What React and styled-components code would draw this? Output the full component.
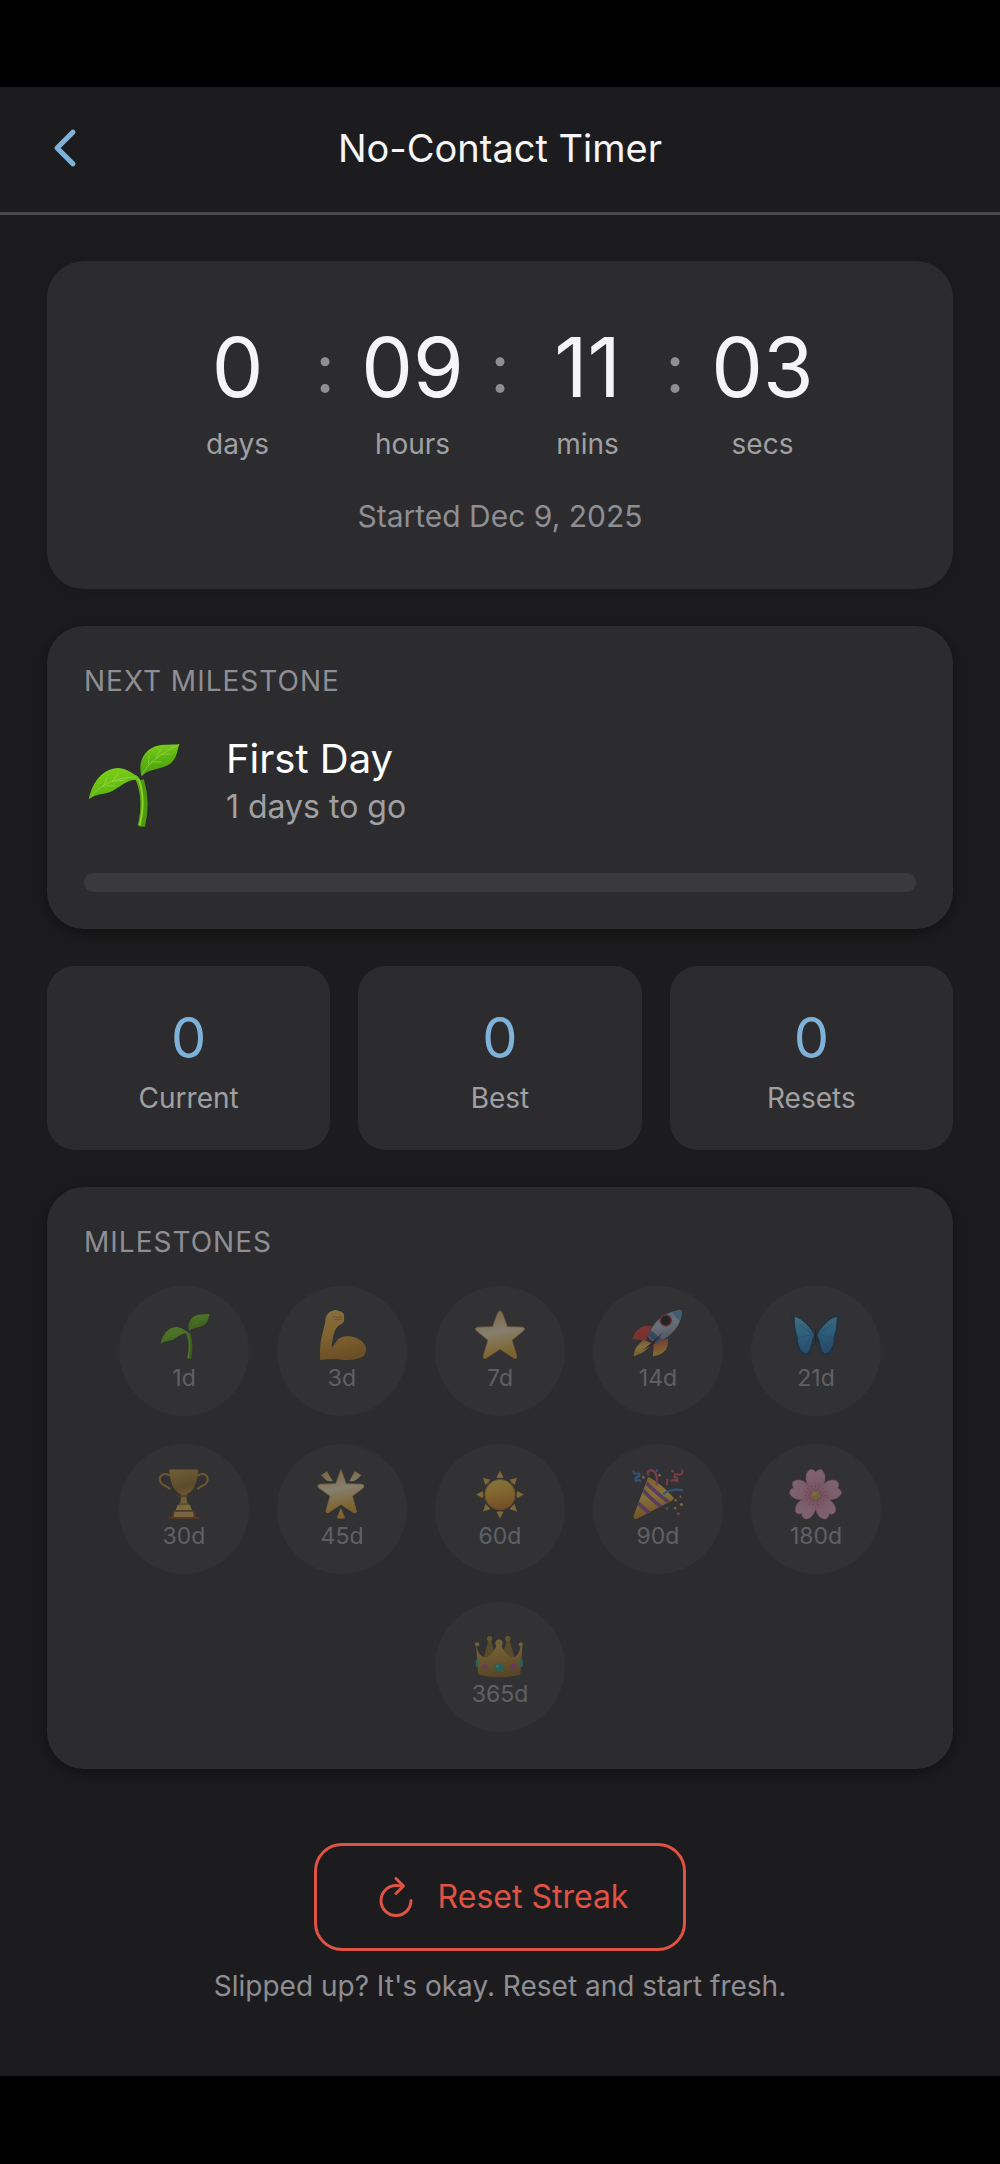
import React from "react";
import styled, { createGlobalStyle } from "styled-components";

const color = {
  page: "#1c1c1e",
  card: "#2c2c2e",
  track: "#3a3a3c",
  line: "#48484a",
  text: "#f5f5f7",
  secondary: "#a0a0a3",
  muted: "#8e8e93",
  blue: "#7fb2d8",
  red: "#e05243",
};

const GlobalStyle = createGlobalStyle`
  *, *::before, *::after { box-sizing: border-box; }
  body {
    margin: 0;
    background: #000;
    color: ${color.text};
    font-family: Inter, "Liberation Sans", sans-serif;
    font-weight: 400;
  }
  h1, h2, h3, p, ul { margin: 0; padding: 0; font-weight: 400; }
`;

const Screen = styled.div`
  padding: 87px 0 88px;
`;

const Panel = styled.div`
  background: ${color.page};
`;

const Header = styled.header`
  display: grid;
  grid-template-columns: 56px 1fr 56px;
  align-items: center;
  padding: 33px 37px 36px;
  border-bottom: 3px solid ${color.line};
`;

const BackButton = styled.button`
  display: flex;
  padding: 0;
  border: 0;
  background: none;
  color: ${color.blue};
  cursor: pointer;
`;

const Title = styled.h1`
  font-size: 38px;
  line-height: 56px;
  text-align: center;
`;

const Content = styled.main`
  display: flex;
  flex-direction: column;
  gap: 37px;
  padding: 46px 47px 72px;
`;

const Card = styled.section`
  padding: ${(p) => (p.$roomy ? "57px 37px 55px" : "37px")};
  border-radius: 37px;
  background: ${color.card};
  box-shadow: 0 4px 18px rgba(0, 0, 0, ${(p) => (p.$roomy ? 0.15 : 0.4)});
`;

const Clock = styled.div`
  display: flex;
  justify-content: center;
`;

const Unit = styled.div`
  display: flex;
  flex-direction: column;
  align-items: center;
  gap: 8px;
  width: 129px;
`;

const UnitValue = styled.span`
  font-size: 82px;
  line-height: 100px;
`;

const Colon = styled.span`
  width: 46px;
  color: ${color.muted};
  font-size: 68px;
  line-height: 100px;
  text-align: center;
`;

const Label = styled.span`
  color: ${color.secondary};
  font-size: 28px;
  line-height: 36px;
`;

const Started = styled.p`
  margin-top: 36px;
  color: ${color.muted};
  font-size: 30px;
  line-height: 36px;
  text-align: center;
`;

const SectionTitle = styled.h2`
  color: ${color.muted};
  font-size: 28px;
  line-height: 36px;
  letter-spacing: 1px;
  text-transform: uppercase;
`;

const NextRow = styled.div`
  display: flex;
  align-items: center;
  gap: 46px;
  margin: 36px 0 42px;
`;

const NextName = styled.h3`
  font-size: 40px;
  line-height: 48px;
  color: #fff;
`;

const NextLeft = styled.p`
  color: ${color.secondary};
  font-size: 32px;
  line-height: 48px;
`;

const Track = styled.div`
  height: 19px;
  border-radius: 9px;
  background: ${color.track};
  overflow: hidden;
`;

const Fill = styled.div`
  height: 100%;
  background: ${color.blue};
`;

const Stats = styled.div`
  display: grid;
  grid-template-columns: repeat(3, 1fr);
  gap: 28px;
`;

const Stat = styled.div`
  display: flex;
  flex-direction: column;
  align-items: center;
  gap: 8px;
  padding: 38px 16px 34px;
  border-radius: 28px;
  background: ${color.card};
`;

const StatValue = styled.span`
  color: ${color.blue};
  font-size: 56px;
  line-height: 68px;
`;

const Badges = styled.ul`
  display: flex;
  flex-wrap: wrap;
  justify-content: center;
  gap: 28px;
  margin-top: 26px;
  list-style: none;
`;

const Badge = styled.li`
  display: flex;
  flex-direction: column;
  align-items: center;
  justify-content: center;
  gap: 2px;
  width: 130px;
  height: 130px;
  border-radius: 50%;
  background: ${color.track};
  opacity: ${(p) => (p.$locked ? 0.45 : 1)};
`;

const BadgeDays = styled.span`
  color: ${color.secondary};
  font-size: 23px;
  line-height: 30px;
`;

const ResetArea = styled.div`
  display: flex;
  flex-direction: column;
  align-items: center;
  gap: 18px;
  padding-top: 37px;
`;

const ResetButton = styled.button`
  display: flex;
  align-items: center;
  gap: 18px;
  padding: 27px 55px;
  border: 3px solid ${color.red};
  border-radius: 28px;
  background: none;
  color: ${color.red};
  font: inherit;
  font-size: 32px;
  line-height: 48px;
  cursor: pointer;
`;

const Hint = styled.p`
  color: ${color.muted};
  font-size: 28px;
  line-height: 35px;
  text-align: center;
`;

const EmojiSvg = styled.svg`
  flex: none;
  width: ${(p) => p.$size}px;
  height: ${(p) => p.$size}px;
  overflow: visible;
`;

const Gradients = styled.svg`
  display: block;
  width: 0;
  height: 0;
`;

const STAR = "M50 4 Q53 4 55 9 L64 34 L93 35 Q100 37 95 42 L73 60 L82 90 Q83 98 76 94 L50 77 L24 94 Q17 98 18 90 L27 60 L5 42 Q0 37 7 35 L36 34 L45 9 Q47 4 50 4Z";

const art = {
  sprout: (
    <>
      <path d="M5 67C9 48 20 35 36 34.500C45 35 51 41 56 43C61 50 66 66 63.500 94Q59 97 56 94C60 78 60 62 54 47C46 46 39 53 31 57.500C21 63 13 60 5 67Z" fill="url(#leaf)" />
      <path d="M60 43C57 33 59 23 67 16C76 8 90 11 99.700 9.400C97 14 98 22 91 29C82 37 68 34 60 43Z" fill="url(#leaf)" />
      <path d="M7 65C18 50 35 44 54 44M60 42C66 30 79 20 97 11M20 54L24 45M29 49L36 40M23 53L33 53M32 48L43 47M67 31L68 22M75 24L80 15M70 28L81 28M80 20L90 20" fill="none" stroke="#b3e26a" strokeWidth="1" opacity=".5" />
      <path d="M59 47C63 60 64 78 60 95" fill="none" stroke="#4e9a12" strokeWidth="7" />
      <path d="M57 46C62 60 62 78 58 94" fill="none" stroke="#8fd328" strokeWidth="2" />
    </>
  ),
  arm: (
    <>
      <path d="M8 96C7 75 9 58 13 45L18 24C18 14 23 6 31 4Q38 0 44 4Q53 5 54 13L54 23Q51 29 45 31C35 37 32 55 30 74C37 69 39 58 48 55C61 49 80 53 90 64Q102 77 92 90C82 98 58 100 42 96Q24 96 8 98Z" fill="url(#skin)" />
      <path d="M26 77C31 82 31 72 38 67M31 14Q40 18 50 15M35 20Q42 22 50 19" fill="none" stroke="#a87420" strokeWidth="1.500" />
    </>
  ),
  star: <path d={STAR} fill="url(#star)" stroke="#d99b52" strokeWidth="1.500" />,
  rocket: (
    <>
      <path d="M38 33C20 29 5 40 1 58L27 60ZM69 56C72 75 62 89 40 91L42 68Z" fill="url(#fin)" />
      <path d="M22 59C9 69 4 80 3 91C18 87 29 80 38 66Z" fill="url(#flame)" />
      <path d="M31 54C38 27 62 4 95 2C97 30 78 52 45 67Z" fill="url(#hull)" />
      <path d="M77 6L95 2Q97 12 92 24Q82 14 77 6Z" fill="#5c9bc9" />
      <path d="M32 52L47 65L57 58C50 52 43 47 36 41Z" fill="#37699c" />
      <path d="M20 80L60 45L42 67Z" fill="#4c1f28" />
      <circle cx="65" cy="22" r="12" fill="#a8323a" />
      <circle cx="65" cy="22" r="9" fill="#171a20" />
    </>
  ),
  butterfly: (
    <g transform="translate(-2.5 0) scale(1.06 1)">
      <path d="M49 52C43 33 24 12 4 12Q1 17 8 25C9 37 8 47 14 56Q11 65 17 77C22 90 31 93 37 88C45 78 43 65 49 54C54 65 52 78 60 88C67 93 76 90 81 77Q87 65 84 56C90 47 89 37 90 25Q98 17 94 12C74 12 55 33 49 52Z" fill="#183a58" />
      <path d="M46 50C39 35 26 20 11 15C11 28 12 45 17 55Q15 64 21 76Q27 87 34 84C42 75 39 64 46 50ZM52 50C59 35 72 20 87 15C87 28 86 45 81 55Q83 64 77 76Q71 87 64 84C56 75 59 64 52 50Z" fill="url(#wing)" />
      <path d="M45 49L17 55M45 49L25 80M45 49L20 30M53 49L81 55M53 49L73 80M53 49L78 30" stroke="#246b9b" strokeWidth="1" />
      <path d="M49 38Q52 56 49 70Q46 56 49 38Z" fill="#17191c" />
    </g>
  ),
  trophy: (
    <>
      <path d="M24 17C10 8 0 18 5 29C9 38 20 36 23 43M75 17C89 8 99 18 94 29C90 38 79 36 76 43" fill="none" stroke="#ba8c2d" strokeWidth="4" />
      <path d="M22 5H77C76 28 71 45 55 53V62Q55 70 62 74L65 83H34L37 74Q44 70 44 62V53C28 45 23 28 22 5Z" fill="url(#gold)" />
      <path d="M36 56H63M38 71H61" stroke="#6f4e13" strokeWidth="2" />
      <path d="M30 83H70L74 96H79V100H20V96H26Z" fill="#87421e" />
      <path d="M32 86H67L69 96H30Z" fill="#d4aa57" />
    </>
  ),
  glow: (
    <>
      <path d="M48 5L58 32L89 33Q95 35 91 40L70 56L78 86Q76 90 71 87L48 72L25 87Q20 90 19 86L27 56L5 40Q1 35 7 33L38 32Z" fill="url(#star)" stroke="#d99b52" strokeWidth="1.500" />
      <path d="M21 8L32 27Q24 29 18 24L10 16ZM75 8L64 27Q72 29 78 24L87 16ZM48 79L56 98Q48 101 40 98Z" fill="url(#star)" />
    </>
  ),
  sun: (
    <>
      {[0, 45, 90, 135, 180, 225, 270, 315].map((a) => (
        <path key={a} d="M43 20L50 7L57 20Q50 22 43 20Z" fill="#dfad45" transform={`rotate(${a} 50 53)`} />
      ))}
      <circle cx="50" cy="53" r="29" fill="url(#sun)" stroke="#a9742c" strokeWidth="2" />
    </>
  ),
  party: (
    <>
      <path d="M31 19C44 24 67 43 81 60Q76 67 62 72L9 100Q2 100 3 94Z" fill="url(#cone)" />
      <path d="M20 49Q35 64 51 78L59 74Q38 59 23 41ZM11 74L29 90L36 86L14 67ZM26 34Q45 53 66 69L74 66Q47 46 29 27Z" fill="#925197" />
      <path d="M47 35Q51 7 35 6Q27 10 32 16" fill="none" stroke="#d95368" strokeWidth="4" />
      <path d="M60 52Q77 40 98 45M3 7Q2 14 10 13Q17 11 14 18Q3 20 8 27Q16 22 17 29" fill="none" stroke="#3984d0" strokeWidth="4" />
      <path d="M96 5Q100 15 90 15Q80 10 82 20Q88 19 87 27Q77 23 75 28M68 23L67 35" fill="none" stroke="#d95368" strokeWidth="4" />
      <g fill="#e1b03e">
        <circle cx="22" cy="20" r="2.500" /><circle cx="53" cy="16" r="2.500" /><circle cx="84" cy="64" r="2.500" /><circle cx="95" cy="72" r="3" /><circle cx="83" cy="79" r="2.500" /><circle cx="93" cy="57" r="2" />
      </g>
      <circle cx="48" cy="7" r="2.500" fill="#3984d0" /><circle cx="67" cy="80" r="2.500" fill="#3984d0" />
      <circle cx="89" cy="90" r="3" fill="#d95368" /><circle cx="78" cy="8" r="2.500" fill="#d95368" />
    </>
  ),
  flower: (
    <>
      {[0, 72, 144, 216, 288].map((a) => (
        <g key={a} transform={`rotate(${a} 49 54)`}>
          <path d="M49 53C33 40 26 20 34 9Q39 2 47 7L49 10L52 7Q60 2 64 9C72 20 65 40 49 53Z" fill="url(#petal)" stroke="#c7839b" strokeWidth="1" />
          <path d="M49 46V31M46 44L41 35M52 44L57 35" stroke="#a84b6b" strokeWidth="1.300" strokeDasharray="3 4" />
        </g>
      ))}
      <circle cx="49" cy="54" r="9" fill="#c99d46" />
      <circle cx="47" cy="52" r="4" fill="#ddb960" />
    </>
  ),
  crown: (
    <>
      <path d="M15 78L28 28H33Q36 50 48 60Q60 50 63 28H68L82 78Z" fill="#8f7124" />
      <circle cx="30" cy="26" r="5" fill="#ac862f" /><circle cx="65" cy="26" r="5" fill="#ac862f" />
      <path d="M4 38Q8 60 21 63Q34 61 45 37H51Q62 61 75 63Q87 60 90 38L93 40L89 95Q48 106 8 95Z" fill="url(#crown)" />
      <circle cx="6" cy="37" r="4" fill="#caa044" /><circle cx="48" cy="35" r="7" fill="#caa044" /><circle cx="90" cy="37" r="4" fill="#caa044" />
      <circle cx="48" cy="82" r="9" fill="#2c9b8a" /><circle cx="45" cy="79" r="3" fill="#62c3b1" />
      <circle cx="21" cy="80" r="5" fill="#ad4e92" /><circle cx="76" cy="80" r="6" fill="#ad4e92" />
      <ellipse cx="6" cy="73" rx="3" ry="8" fill="#2c9b8a" /><ellipse cx="91" cy="73" rx="3" ry="8" fill="#2c9b8a" />
    </>
  ),
};

const gradients = [
  ["leaf", ["#82d51b", "#5eb510", "#4d9d10"]],
  ["skin", ["#f6c456", "#e8a834", "#b97c20"]],
  ["star", ["#d7ab58", "#f1e5bb", "#e2a426"]],
  ["fin", ["#df3e32", "#d53a34", "#e8ae35"]],
  ["flame", ["#d96733", "#e6c654", "#d88a25"]],
  ["hull", ["#87a9c7", "#b4c1cf", "#7485a0"]],
  ["wing", ["#63b8e4", "#329dd8", "#2376b4"]],
  ["gold", ["#c9a044", "#9b7023", "#dcb653"]],
  ["sun", ["#f0ce5b", "#e8ad2f", "#cf7b20"]],
  ["cone", ["#dba128", "#f1c94c", "#c68019"]],
  ["petal", ["#e9a9c0", "#df9db6", "#cf7896"]],
  ["crown", ["#d1aa4c", "#ba8d31", "#8c6722"]],
];

function GradientDefs() {
  return (
    <Gradients aria-hidden="true">
      <defs>
        {gradients.map(([id, stops]) => (
          <linearGradient key={id} id={id} x1="0" y1="0" x2=".2" y2="1">
            {stops.map((c, i) => (
              <stop key={c} offset={i / 2} stopColor={c} />
            ))}
          </linearGradient>
        ))}
      </defs>
    </Gradients>
  );
}

function Emoji({ name, size }) {
  return (
    <EmojiSvg $size={size} viewBox="0 0 100 100" aria-hidden="true">
      {art[name]}
    </EmojiSvg>
  );
}

const units = [
  ["0", "days"],
  ["09", "hours"],
  ["11", "mins"],
  ["03", "secs"],
];

const stats = ["Current", "Best", "Resets"];

const milestones = [
  ["sprout", 1],
  ["arm", 3],
  ["star", 7],
  ["rocket", 14],
  ["butterfly", 21],
  ["trophy", 30],
  ["glow", 45],
  ["sun", 60],
  ["party", 90],
  ["flower", 180],
  ["crown", 365],
];

export default function App() {
  const progress = 0;
  return (
    <Screen>
      <GlobalStyle />
      <Panel>
        <Header>
          <BackButton type="button" aria-label="Back">
            <svg width="56" height="56" viewBox="0 0 512 512" aria-hidden="true">
              <path d="M328 112L184 256l144 144" fill="none" stroke="currentColor" strokeWidth="48" strokeLinecap="round" strokeLinejoin="round" />
            </svg>
          </BackButton>
          <Title>No-Contact Timer</Title>
        </Header>
        <Content>
          <Card $roomy>
            <Clock role="timer">
              {units.map(([value, label], i) => (
                <React.Fragment key={label}>
                  {i > 0 && <Colon>:</Colon>}
                  <Unit>
                    <UnitValue>{value}</UnitValue>
                    <Label>{label}</Label>
                  </Unit>
                </React.Fragment>
              ))}
            </Clock>
            <Started>Started Dec 9, 2025</Started>
          </Card>

          <Card>
            <SectionTitle>Next Milestone</SectionTitle>
            <NextRow>
              <Emoji name="sprout" size={96} />
              <div>
                <NextName>First Day</NextName>
                <NextLeft>1 days to go</NextLeft>
              </div>
            </NextRow>
            <Track role="progressbar" aria-label="Progress to First Day" aria-valuemin={0} aria-valuemax={100} aria-valuenow={progress}>
              <Fill style={{ width: `${progress}%` }} />
            </Track>
          </Card>

          <Stats>
            {stats.map((label) => (
              <Stat key={label}>
                <StatValue>0</StatValue>
                <Label>{label}</Label>
              </Stat>
            ))}
          </Stats>

          <Card>
            <SectionTitle>Milestones</SectionTitle>
            <Badges>
              {milestones.map(([name, days]) => (
                <Badge key={name} $locked>
                  <Emoji name={name} size={52} />
                  <BadgeDays>{days}d</BadgeDays>
                </Badge>
              ))}
            </Badges>
          </Card>

          <ResetArea>
            <ResetButton type="button">
              <svg width="48" height="48" viewBox="0 0 512 512" fill="none" stroke="currentColor" strokeWidth="32" strokeLinecap="round" aria-hidden="true">
                <path d="M320 146s24.360-12-64-12a160 160 0 1 0 160 160" strokeMiterlimit="10" />
                <path d="M256 58l80 80-80 80" strokeLinejoin="round" />
              </svg>
              Reset Streak
            </ResetButton>
            <Hint>Slipped up? It's okay. Reset and start fresh.</Hint>
          </ResetArea>
        </Content>
      </Panel>
      <GradientDefs />
    </Screen>
  );
}
